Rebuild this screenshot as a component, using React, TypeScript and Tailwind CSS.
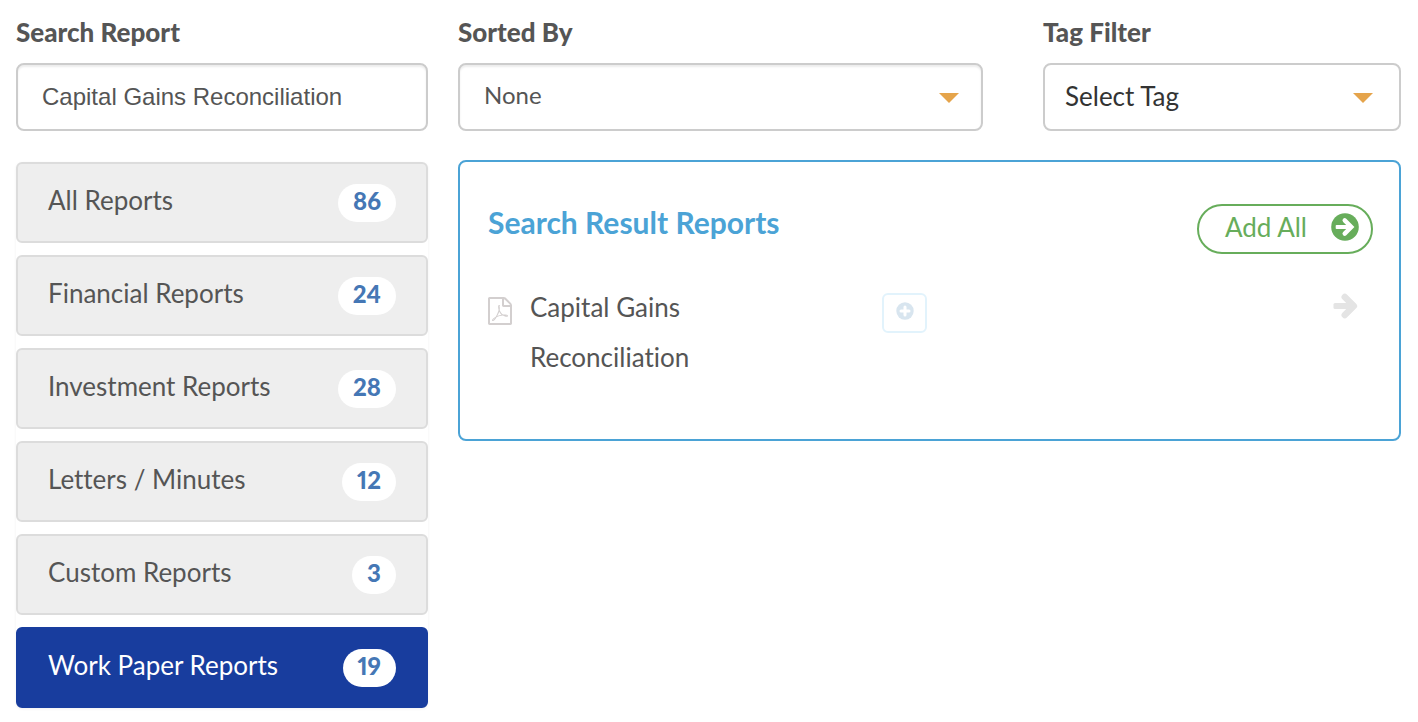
import { useState } from "react";
import { clsx } from "clsx";

interface Category {
  id: string;
  name: string;
  count: number;
}

const categories: Category[] = [
  { id: "all", name: "All Reports", count: 86 },
  { id: "financial", name: "Financial Reports", count: 24 },
  { id: "investment", name: "Investment Reports", count: 28 },
  { id: "letters", name: "Letters / Minutes", count: 12 },
  { id: "custom", name: "Custom Reports", count: 3 },
  { id: "workpaper", name: "Work Paper Reports", count: 19 },
];

function Caret({ className }: { className: string }) {
  return (
    <svg
      viewBox="0 0 20 10"
      className={clsx("pointer-events-none absolute top-[30px] h-[10px] w-5 fill-[#e5a44b]", className)}
      aria-hidden="true"
    >
      <path d="M0 0h20L10 10z" />
    </svg>
  );
}

function PdfIcon() {
  return (
    <svg viewBox="0 0 1536 1792" className="h-7 w-6 fill-[#d3cfcf]" aria-hidden="true">
      <path d="M1468 380q28 28 48 76t20 88v1152q0 40-28 68t-68 28h-1344q-40 0-68-28t-28-68v-1600q0-40 28-68t68-28h896q40 0 88 20t76 48zm-444-244v376h376q-10-29-22-41l-313-313q-12-12-41-22zm384 1528v-1024h-416q-40 0-68-28t-28-68v-416h-768v1536h1280zm-514-593q33 26 84 56 59-7 117-7 147 0 177 49 16 22 2 52 0 1-1 2l-2 2v1q-6 38-71 38-48 0-115-20t-130-53q-221 24-392 83-153 262-242 262-15 0-28-7l-24-12q-1-1-6-5-10-10-6-36 9-40 56-91.500t132-96.500q14-9 23 6 2 2 2 4 52-85 107-197 68-136 104-262-24-82-30.500-159.500t6.500-127.500q11-40 42-40h22q23 0 35 15 18 21 9 68-2 6-4 8 1 3 1 8v30q-2 123-14 192 55 164 146 238zm-576 411q52-24 137-158-51 40-87.500 84t-49.500 74zm398-920q-15 42-2 132 1-7 7-44 0-3 7-43 1-4 4-8-1-1-1-2-1-2-1-3-1-22-13-36 0 1-1 2v2zm-124 661q135-54 284-81-2-1-13-9.500t-16-13.500q-76-67-127-176-27 86-83 197-30 56-45 83zm646-16q-24-24-140-24 76 28 124 28 14 0 18-1 0-1-2-3z" />
    </svg>
  );
}

function CircleArrowIcon() {
  return (
    <svg viewBox="0 0 28 28" className="size-7" aria-hidden="true">
      <circle cx="14" cy="14" r="13.800" fill="#67ad5b" />
      <rect x="4.700" y="11.900" width="13" height="4.200" rx="0.800" fill="#fff" />
      <path d="M13.700 7.400 20.300 14l-6.600 6.600" fill="none" stroke="#fff" strokeWidth="4.400" strokeLinecap="round" />
    </svg>
  );
}

function ArrowIcon() {
  return (
    <svg viewBox="0 0 26 26" className="size-[26px]" aria-hidden="true">
      <rect x="0.500" y="10" width="18" height="6" rx="1.500" fill="#e4e4e4" />
      <path
        d="M11.800 4 20.800 13l-9 9"
        fill="none"
        stroke="#e4e4e4"
        strokeWidth="6.600"
        strokeLinecap="round"
        strokeLinejoin="round"
      />
    </svg>
  );
}

function PlusIcon() {
  return (
    <svg viewBox="0 0 18 18" className="size-[18px]" aria-hidden="true">
      <circle cx="9" cy="9" r="8.700" fill="#d8e5ef" />
      <path d="M9 5v8M5 9h8" stroke="#fff" strokeWidth="3" strokeLinecap="round" />
    </svg>
  );
}

export default function App() {
  const [query, setQuery] = useState("Capital Gains Reconciliation");
  const [active, setActive] = useState("workpaper");

  return (
    <main className="grid grid-cols-[412fr_943fr] items-start gap-x-[30px] bg-white pb-3.5 pl-4 pr-[17px] pt-4 font-['Lato',sans-serif] text-[26px] text-[#555] [font-variant-ligatures:none]">
      {/* Search and categories */}
      <div>
        <label htmlFor="search" className="block text-[26px] font-black leading-8">
          Search Report
        </label>
        <input
          id="search"
          type="text"
          value={query}
          onChange={(e) => setQuery(e.target.value)}
          className="mt-[15px] block h-[68px] w-full rounded-lg border-2 border-[#ccc] px-6 font-['Liberation_Sans',sans-serif] text-[24px] shadow-[inset_0_2px_2px_rgba(0,0,0,0.075)] outline-none"
        />
        <nav className="mt-[31px] flex flex-col gap-3 rounded-md shadow-[0_1px_3px_rgba(0,0,0,0.06)]">
          {categories.map((category) => (
            <button
              key={category.id}
              type="button"
              onClick={() => setActive(category.id)}
              className={clsx(
                "flex h-[81px] items-center justify-between rounded-md border-2 px-[30px] text-left",
                active === category.id
                  ? "border-[#183d9e] bg-[#183d9e] text-white"
                  : "border-[#dcdcdc] bg-[#eee]"
              )}
            >
              <span className="pb-1">{category.name}</span>
              <span className="h-[38px] rounded-full bg-white px-[15px] text-[24px] font-black proportional-nums leading-[34px] text-[#4577b5]">
                {category.count}
              </span>
            </button>
          ))}
        </nav>
      </div>

      {/* Filters and results */}
      <div>
        <div className="grid grid-cols-[525fr_358fr] gap-x-[60px]">
          <div>
            <label htmlFor="sort" className="block text-[26px] font-black leading-8">
              Sorted By
            </label>
            <div className="relative mt-[15px]">
              <select
                id="sort"
                className="block h-[68px] w-full appearance-none rounded-lg border-2 border-[#ccc] bg-white px-6 pb-1 text-[24px] shadow-[inset_0_2px_2px_rgba(0,0,0,0.075)] outline-none"
              >
                <option>None</option>
              </select>
              <Caret className="right-6" />
            </div>
          </div>
          <div>
            <label htmlFor="tag" className="block text-[26px] font-black leading-8">
              Tag Filter
            </label>
            <div className="relative mt-[15px]">
              <select
                id="tag"
                className="block h-[68px] w-full appearance-none rounded-lg border-2 border-[#ccc] bg-white px-5 pb-0.5 text-[26px] text-[#333] outline-none"
              >
                <option>Select Tag</option>
              </select>
              <Caret className="right-7" />
            </div>
          </div>
        </div>

        <section className="mt-[29px] rounded-lg border-2 border-[#4ba3d6] pb-[57px] pl-7 pr-[26px] pt-[42px]">
          <div className="flex items-start justify-between">
            <h2 className="text-[30px] font-bold leading-9 text-[#4ba3d6]">Search Result Reports</h2>
            <button
              type="button"
              className="flex h-[50px] items-center gap-6 rounded-full border-2 border-[#67ad5b] pb-1 pl-[26px] pr-3 text-[#67ad5b]"
            >
              Add All
              <CircleArrowIcon />
            </button>
          </div>

          <div className="mt-7 flex items-start">
            <div className="pt-[15px]">
              <PdfIcon />
            </div>
            <p className="ml-[18px] w-[240px] leading-[50px]">Capital Gains Reconciliation</p>
            <button
              type="button"
              aria-label="Add to list"
              className="ml-28 mt-[11px] flex h-10 w-[45px] items-center justify-center rounded-md border-2 border-[#e2f3fc] pb-1"
            >
              <PlusIcon />
            </button>
            <button type="button" aria-label="Add report" className="ml-auto mr-3.5 mt-[11px]">
              <ArrowIcon />
            </button>
          </div>
        </section>
      </div>
    </main>
  );
}
